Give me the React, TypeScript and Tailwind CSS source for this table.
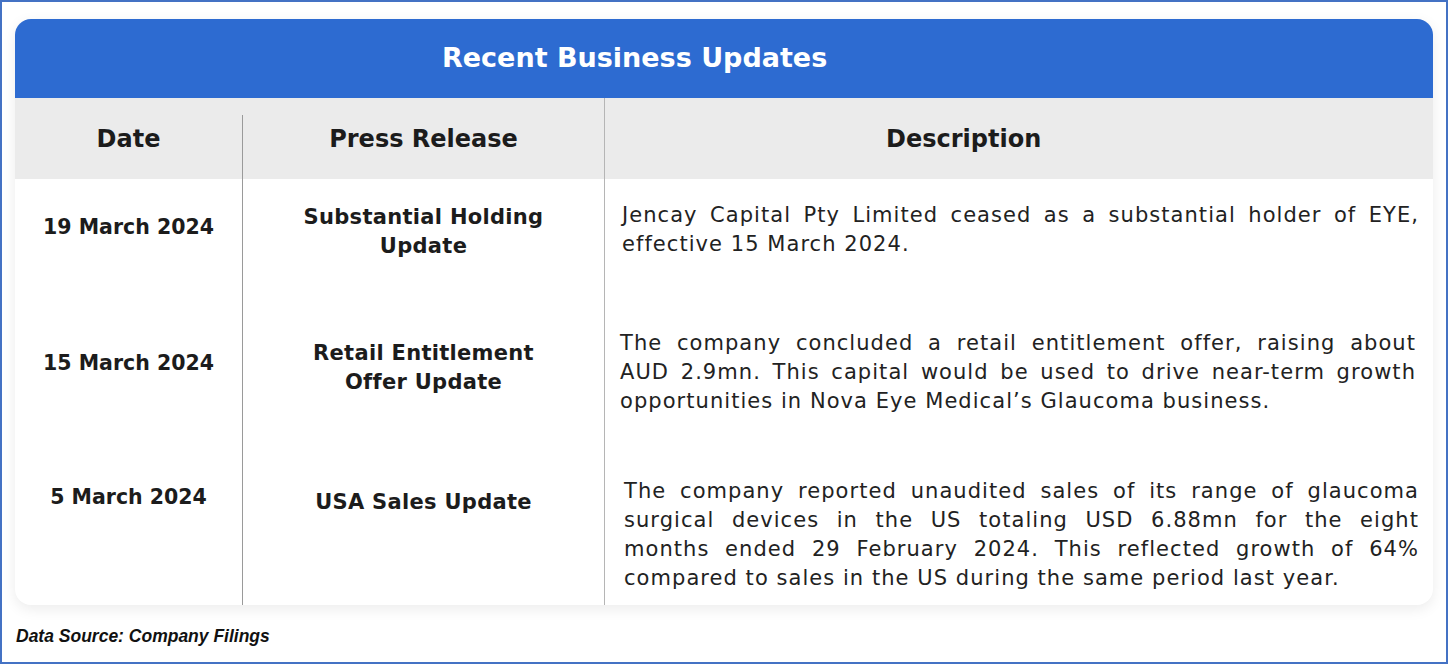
const rows = [
  {
    date: '19 March 2024',
    press: ['Substantial Holding', 'Update'],
    desc: ['Jencay Capital Pty Limited ceased as a substantial holder of EYE,', 'effective 15 March 2024.'],
    h: 'h-[122px]',
    datePt: 'pt-[33px]',
    pressPt: 'pt-[24px]',
    descPad: 'pt-[22px] pl-[17px] pr-[14px]',
  },
  {
    date: '15 March 2024',
    press: ['Retail Entitlement', 'Offer Update'],
    desc: [
      'The company concluded a retail entitlement offer, raising about',
      'AUD 2.9mn. This capital would be used to drive near-term growth',
      'opportunities in Nova Eye Medical’s Glaucoma business.',
    ],
    h: 'h-[150px]',
    datePt: 'pt-[47px]',
    pressPt: 'pt-[38px]',
    descPad: 'pt-[28px] pl-[15px] pr-[17px]',
  },
  {
    date: '5 March 2024',
    press: ['USA Sales Update'],
    desc: [
      'The company reported unaudited sales of its range of glaucoma',
      'surgical devices in the US totaling USD 6.88mn for the eight',
      'months ended 29 February 2024. This reflected growth of 64%',
      'compared to sales in the US during the same period last year.',
    ],
    h: 'h-[154px]',
    datePt: 'pt-[31px]',
    pressPt: 'pt-[37px]',
    descPad: 'pt-[26px] pl-[19px] pr-[14px]',
  },
];

export default function App() {
  return (
    <div className="w-[1448px] h-[664px] bg-white border-2 border-[#4472c4] font-['DejaVu_Sans',sans-serif] text-[#1c1c1c] overflow-hidden">
      <div className="px-[13px] pt-[17px]">
        <div className="rounded-[16px] bg-white shadow-[0_4px_14px_rgba(0,0,0,0.08)] overflow-hidden">
          {/* Title bar */}
          <div className="h-[79px] bg-[#2d6bd1] flex items-center pl-[427px]">
            <h1 className="text-white text-[27px] font-bold">Recent Business Updates</h1>
          </div>

          {/* Column headers */}
          <div className="grid grid-cols-[227px_362px_1fr] h-[81px] bg-[#ebebeb]">
            <div className="flex items-center justify-center text-[24px] font-bold">Date</div>
            <div className="flex items-center justify-center text-[24px] font-bold border-l border-[#9a9a9a] mt-[17px] pb-[17px]">
              Press Release
            </div>
            <div className="flex items-center pl-[281px] text-[24px] font-bold border-l border-[#b5b5b5]">
              Description
            </div>
          </div>

          {rows.map((r) => (
            <div key={r.date} className={`grid grid-cols-[227px_362px_1fr] ${r.h}`}>
              <div className={`text-center text-[20.5px] leading-[30px] font-bold ${r.datePt}`}>{r.date}</div>
              <div className={`text-center text-[21px] tracking-[0.3px] leading-[29px] font-bold border-l border-[#9a9a9a] ${r.pressPt}`}>
                {r.press.map((l) => (
                  <div key={l}>{l}</div>
                ))}
              </div>
              <div className={`border-l border-[#b5b5b5] text-[21px] tracking-[1.05px] leading-[29px] text-[#222] ${r.descPad}`}>
                {r.desc.map((l, i) => (
                  <div
                    key={l}
                    className={i < r.desc.length - 1 ? 'text-justify [text-align-last:justify]' : 'text-left'}
                  >
                    {l}
                  </div>
                ))}
              </div>
            </div>
          ))}
        </div>
      </div>
      <p className="pl-[14px] pt-[18px] text-[17.5px] font-bold italic font-['Liberation_Sans',sans-serif] text-[#111]">
        Data Source: Company Filings
      </p>
    </div>
  );
}
